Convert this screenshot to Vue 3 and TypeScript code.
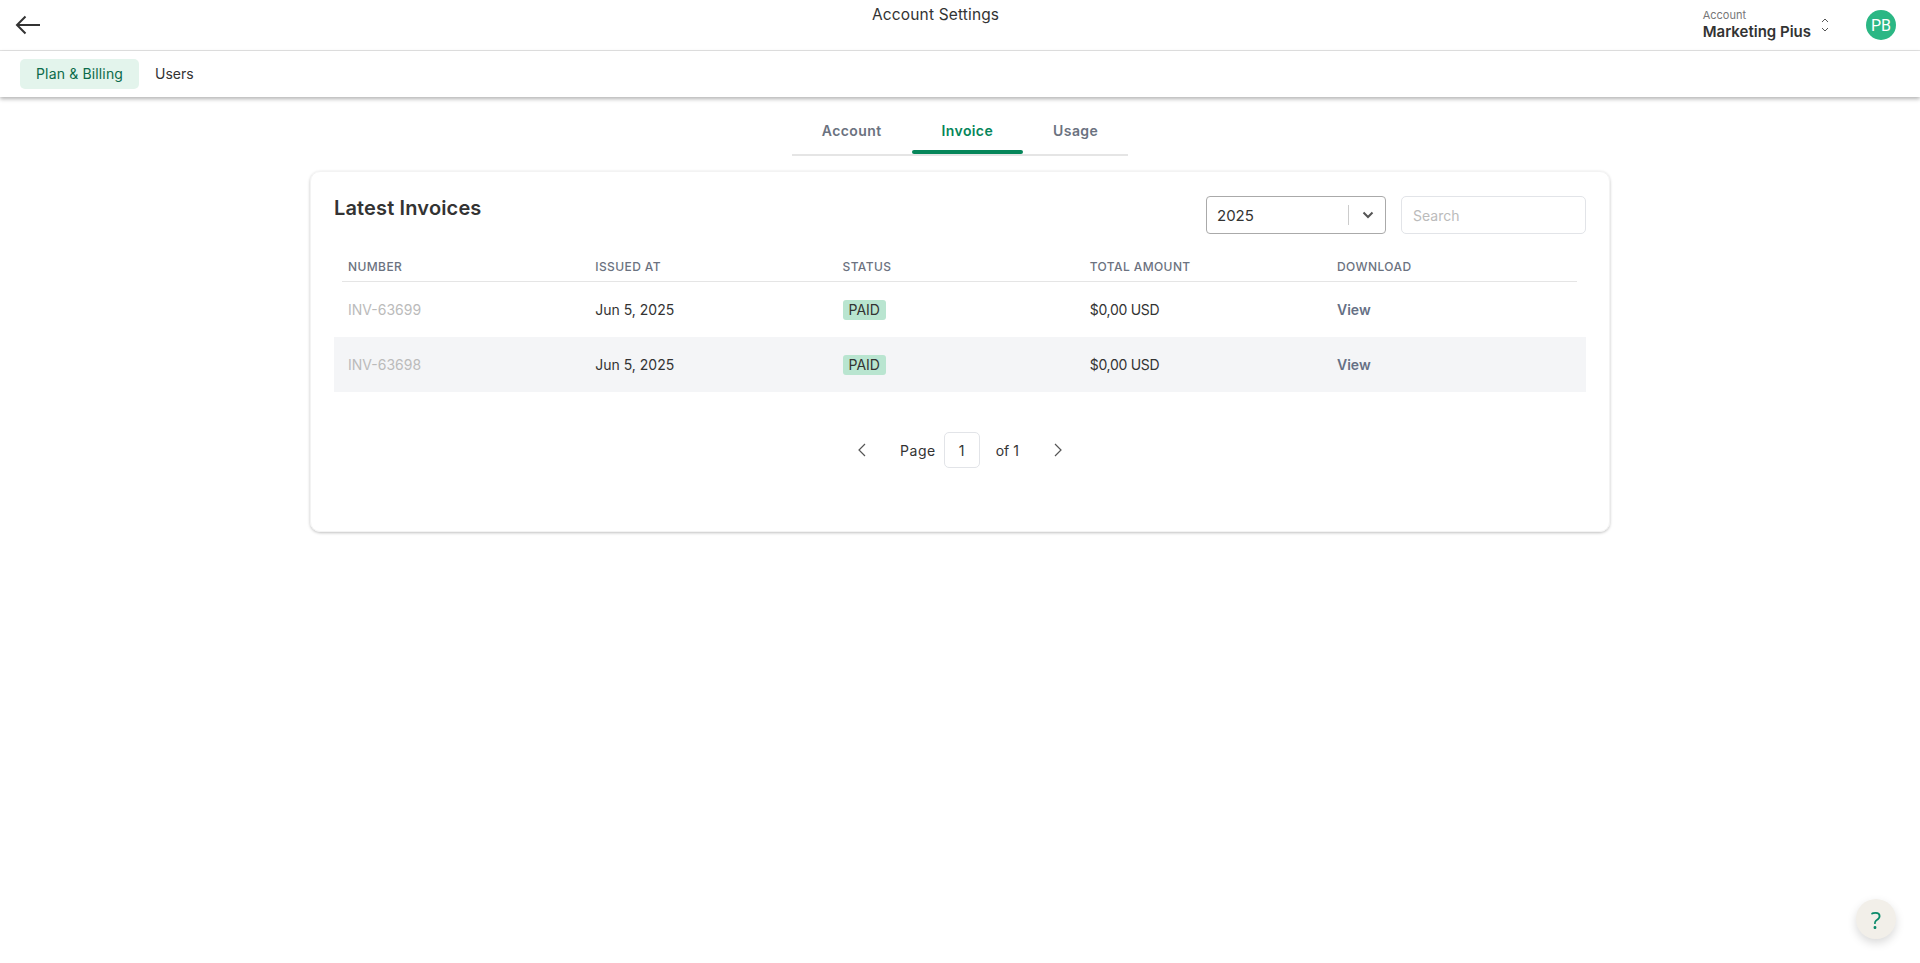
<script setup lang="ts">
type Invoice = {
  number: string
  issuedAt: string
  status: string
  total: string
}

const subTabs = ['Account', 'Invoice', 'Usage']
const columns = ['Number', 'Issued at', 'Status', 'Total amount', 'Download']

const invoices: Invoice[] = [
  { number: 'INV-63699', issuedAt: 'Jun 5, 2025', status: 'PAID', total: '$0,00 USD' },
  { number: 'INV-63698', issuedAt: 'Jun 5, 2025', status: 'PAID', total: '$0,00 USD' },
]
</script>

<template>
  <div class="page">
    <header class="topbar">
      <div class="topbar-left">
        <svg class="back" width="26" height="20" viewBox="0 0 26 20" fill="none" stroke="#333" stroke-width="2">
          <path d="M25 10H2M10.5 1.5 2 10l8.5 8.5" />
        </svg>
      </div>
      <div class="page-title">Account Settings</div>
      <div class="account">
        <div class="account-text">
          <span class="account-label">Account</span>
          <strong class="account-name">Marketing Pius</strong>
        </div>
        <svg class="updown" width="10" height="16" viewBox="0 0 10 16" fill="none" stroke="#555" stroke-width="1">
          <path d="M2 5l3-3 3 3M2 11l3 3 3-3" />
        </svg>
        <div class="avatar">PB</div>
      </div>
    </header>

    <nav class="mainnav">
      <a class="navlink active">Plan &amp; Billing</a>
      <a class="navlink">Users</a>
    </nav>

    <main class="content">
      <div class="tabs">
        <a v-for="tab in subTabs" :key="tab" class="tab" :class="{ current: tab === 'Invoice' }">{{ tab }}</a>
      </div>

      <section class="card">
        <div class="card-head">
          <h2>Latest Invoices</h2>
          <div class="filters">
            <div class="year-select">
              <span class="year">2025</span>
              <span class="sep"></span>
              <svg width="12" height="8" viewBox="0 0 12 8" fill="none" stroke="#555" stroke-width="2">
                <path d="M1.5 1.5 6 6l4.5-4.5" />
              </svg>
            </div>
            <input class="search" type="text" placeholder="Search" />
          </div>
        </div>

        <div class="thead">
          <div v-for="col in columns" :key="col" class="th">{{ col }}</div>
        </div>
        <div v-for="inv in invoices" :key="inv.number" class="row">
          <div class="inv-number">{{ inv.number }}</div>
          <div>{{ inv.issuedAt }}</div>
          <div><span class="badge">{{ inv.status }}</span></div>
          <div class="total">{{ inv.total }}</div>
          <div><a class="view">View</a></div>
        </div>

        <div class="pager">
          <svg width="10" height="16" viewBox="0 0 10 16" fill="none" stroke="#555" stroke-width="1.2">
            <path d="M8 2 2 8l6 6" />
          </svg>
          <span class="page-word">Page</span>
          <div class="page-box">1</div>
          <span class="page-of">of 1</span>
          <svg width="10" height="16" viewBox="0 0 10 16" fill="none" stroke="#555" stroke-width="1.2">
            <path d="M2 2l6 6-6 6" />
          </svg>
        </div>
      </section>
    </main>

    <button class="help">?</button>
  </div>
</template>

<style>
html,
body {
  background: #fff;
}
</style>

<style scoped>
.page {
  min-height: 963px;
  font-family: Inter, 'Open Sans', sans-serif;
  font-size: 14px;
  color: #333;
}

.topbar {
  display: flex;
  height: 50px;
  padding: 0 24px 0 15px;
  border-bottom: 1px solid #e5e5e5;
}

.topbar-left {
  display: flex;
  align-items: center;
  width: 857px;
}

.page-title {
  padding-top: 3px;
  font-size: 15.5px;
  letter-spacing: 0.15px;
  line-height: 24px;
}

.account {
  display: flex;
  align-items: center;
  margin-left: auto;
}

.account-text {
  display: flex;
  flex-direction: column;
}

.account-label {
  font-size: 11px;
  line-height: 14px;
  color: #777;
}

.account-name {
  font-size: 15px;
  font-weight: 600;
  line-height: 20px;
}

.updown {
  margin: 0 36px 0 9px;
}

.avatar {
  display: grid;
  place-items: center;
  width: 30px;
  height: 30px;
  border-radius: 50%;
  background: #2bb784;
  color: #fff;
  font-family: Roboto, sans-serif;
  font-size: 16px;
}

.mainnav {
  display: flex;
  align-items: center;
  height: 46px;
  padding: 0 20px;
  box-shadow: 0 2px 4px rgba(0, 0, 0, 0.3);
}

.navlink {
  padding: 0 16px;
  line-height: 30px;
  border-radius: 5px;
}

.navlink.active {
  background: #e3f4ec;
  color: #0b6b4a;
  letter-spacing: 0.15px;
}

.content {
  width: 1300px;
  margin: 0 auto;
}

.tabs {
  display: flex;
  justify-content: center;
  height: 59px;
}

.tab {
  height: 59px;
  padding: 0 30px;
  border-bottom: 2px solid #e5e5e5;
  box-sizing: border-box;
  color: #6b7280;
  font-weight: 600;
  letter-spacing: 0.4px;
  line-height: 68px;
}

.tab.current {
  position: relative;
  color: #06865a;
}

.tab.current::after {
  content: '';
  position: absolute;
  left: 0;
  right: 0;
  bottom: 0;
  height: 4px;
  border-radius: 2px;
  background: #06865a;
}

.card {
  height: 361px;
  margin-top: 15px;
  padding: 24px 23px;
  border: 1px solid #f3f3f3;
  border-radius: 10px;
  box-sizing: border-box;
  box-shadow: 0 1px 3px rgba(0, 0, 0, 0.25);
}

.card-head {
  display: flex;
  justify-content: space-between;
  height: 38px;
}

h2 {
  margin: 0;
  font-size: 20px;
  font-weight: 600;
  letter-spacing: 0.15px;
  line-height: 24px;
}

.filters {
  display: flex;
  gap: 15px;
}

.year-select {
  display: flex;
  align-items: center;
  width: 180px;
  padding: 0 11px 0 10px;
  border: 1px solid #aaa;
  border-radius: 4px;
  box-sizing: border-box;
}

.year {
  flex: 1;
  font-size: 15px;
}

.sep {
  width: 1px;
  height: 20px;
  margin-right: 13px;
  background: #ccc;
}

.search {
  width: 185px;
  padding: 0 11px;
  border: 1px solid #e2e4e8;
  border-radius: 5px;
  box-sizing: border-box;
  font: inherit;
  outline: none;
}

.search::placeholder {
  color: #bbb;
}

.thead {
  display: grid;
  grid-template-columns: repeat(5, 247.25px);
  width: 1235px;
  height: 48px;
  margin-left: 8px;
  border-bottom: 1px solid #e5e5e5;
  box-sizing: border-box;
}

.th {
  padding: 25px 0 0 6px;
  color: #6b7280;
  font-size: 12px;
  font-weight: 500;
  letter-spacing: 0.4px;
  line-height: 16px;
  text-transform: uppercase;
}

.row {
  display: grid;
  grid-template-columns: repeat(5, 247.25px);
  align-items: center;
  height: 55px;
  padding-left: 14px;
}

.row:nth-child(even) {
  background: #f4f5f7;
}

.inv-number {
  color: #bbb;
}

.total {
  letter-spacing: -0.3px;
}

.badge {
  display: inline-block;
  padding: 0 6px;
  border-radius: 3px;
  background: #b9e5d0;
  line-height: 20px;
}

.view {
  color: #667085;
  font-weight: 600;
}

.pager {
  display: flex;
  align-items: center;
  justify-content: center;
  height: 36px;
  margin-top: 40px;
}

.page-word {
  margin: 0 8px 0 33px;
  letter-spacing: 0.5px;
}

.page-box {
  display: grid;
  place-items: center;
  width: 36px;
  height: 36px;
  border: 1px solid #e2e4e8;
  border-radius: 5px;
  box-sizing: border-box;
}

.page-of {
  margin: 0 34px 0 16px;
}

.help {
  position: fixed;
  right: 24px;
  bottom: 24px;
  width: 40px;
  height: 40px;
  padding: 0;
  border: none;
  border-radius: 50%;
  background: #f2efe9;
  box-shadow: 0 4px 10px rgba(0, 0, 0, 0.15);
  color: #0a8a6a;
  font-family: 'Open Sans', sans-serif;
  font-size: 24px;
}
</style>
